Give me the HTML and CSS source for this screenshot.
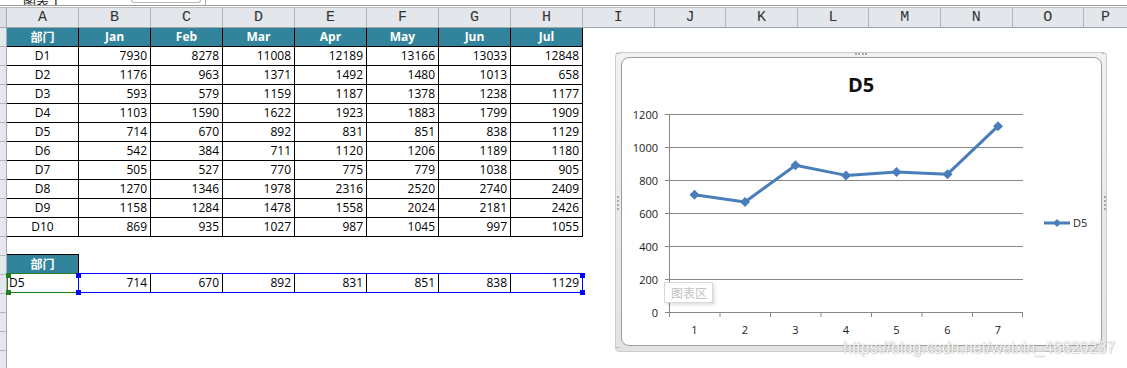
FILE: index.html
```html
<!DOCTYPE html>
<html lang="zh-CN">
<head>
<meta charset="utf-8">
<title>Sheet</title>
<link rel="stylesheet" href="styles.css">
</head>
<body>
<div class="tabs">
  <span class="tab-label">图表 1</span>
  <span class="tab-pill"></span>
  <span class="tab-sep"></span>
</div>
<div class="sheet">
  <div class="rowhdr">
    <div class="corner"></div>
    <div class="rh"></div><div class="rh"></div><div class="rh"></div><div class="rh"></div><div class="rh"></div><div class="rh"></div>
    <div class="rh"></div><div class="rh"></div><div class="rh"></div><div class="rh"></div><div class="rh"></div><div class="rh"></div>
    <div class="rh"></div><div class="rh"></div><div class="rh"></div><div class="rh"></div><div class="rh"></div><div class="rh"></div>
  </div>
  <div class="cells">
    <div class="colhdr">
      <div class="ch">A</div><div class="ch">B</div><div class="ch">C</div><div class="ch">D</div>
      <div class="ch">E</div><div class="ch">F</div><div class="ch">G</div><div class="ch">H</div>
      <div class="ch n">I</div><div class="ch n">J</div><div class="ch n">K</div><div class="ch n">L</div>
      <div class="ch n">M</div><div class="ch n">N</div><div class="ch n">O</div><div class="ch last">P</div>
    </div>
    <div class="tbl">
      <div class="row head"><div class="c cjk">部门</div><div class="c">Jan</div><div class="c">Feb</div><div class="c">Mar</div><div class="c">Apr</div><div class="c">May</div><div class="c">Jun</div><div class="c">Jul</div></div>
      <div class="row"><div class="c name">D1</div><div class="c">7930</div><div class="c">8278</div><div class="c">11008</div><div class="c">12189</div><div class="c">13166</div><div class="c">13033</div><div class="c">12848</div></div>
      <div class="row"><div class="c name">D2</div><div class="c">1176</div><div class="c">963</div><div class="c">1371</div><div class="c">1492</div><div class="c">1480</div><div class="c">1013</div><div class="c">658</div></div>
      <div class="row"><div class="c name">D3</div><div class="c">593</div><div class="c">579</div><div class="c">1159</div><div class="c">1187</div><div class="c">1378</div><div class="c">1238</div><div class="c">1177</div></div>
      <div class="row"><div class="c name">D4</div><div class="c">1103</div><div class="c">1590</div><div class="c">1622</div><div class="c">1923</div><div class="c">1883</div><div class="c">1799</div><div class="c">1909</div></div>
      <div class="row"><div class="c name">D5</div><div class="c">714</div><div class="c">670</div><div class="c">892</div><div class="c">831</div><div class="c">851</div><div class="c">838</div><div class="c">1129</div></div>
      <div class="row"><div class="c name">D6</div><div class="c">542</div><div class="c">384</div><div class="c">711</div><div class="c">1120</div><div class="c">1206</div><div class="c">1189</div><div class="c">1180</div></div>
      <div class="row"><div class="c name">D7</div><div class="c">505</div><div class="c">527</div><div class="c">770</div><div class="c">775</div><div class="c">779</div><div class="c">1038</div><div class="c">905</div></div>
      <div class="row"><div class="c name">D8</div><div class="c">1270</div><div class="c">1346</div><div class="c">1978</div><div class="c">2316</div><div class="c">2520</div><div class="c">2740</div><div class="c">2409</div></div>
      <div class="row"><div class="c name">D9</div><div class="c">1158</div><div class="c">1284</div><div class="c">1478</div><div class="c">1558</div><div class="c">2024</div><div class="c">2181</div><div class="c">2426</div></div>
      <div class="row"><div class="c name">D10</div><div class="c">869</div><div class="c">935</div><div class="c">1027</div><div class="c">987</div><div class="c">1045</div><div class="c">997</div><div class="c">1055</div></div>
    </div>
    <div class="spacer"></div>
    <div class="tbl tbl2">
      <div class="row head head2"><div class="c cjk">部门</div></div>
      <div class="row selrow">
        <div class="c left">D5</div><div class="c">714</div><div class="c">670</div><div class="c">892</div><div class="c">831</div><div class="c">851</div><div class="c">838</div><div class="c">1129</div>
        <div class="sel-a"><i class="hg tl"></i><i class="hg bl"></i></div>
        <div class="sel-b"><i class="hb tl"></i><i class="hb bl"></i><i class="hb tr"></i><i class="hb br"></i></div>
      </div>
    </div>
  </div>
</div>

<div class="chart">
  <div class="chart-inner">
    <svg class="plot" width="479" height="287" viewBox="622 58 479 287" xmlns="http://www.w3.org/2000/svg">
      <text class="title" x="861" y="92" text-anchor="middle">D5</text>
      <g stroke="#878787" stroke-width="1" fill="none">
        <path d="M665 114.5H1023M665 147.5H1023M665 180.5H1023M665 213.5H1023M665 246.5H1023M665 279.5H1023M665 312.5H1023"/>
        <path d="M669.5 114V317M720 312V317M770.5 312V317M821 312V317M871.5 312V317M922 312V317M972.5 312V317M1022.5 312V317"/>
      </g>
      <g class="ylab" text-anchor="end">
        <text x="658" y="118.5">1200</text>
        <text x="658" y="151.5">1000</text>
        <text x="658" y="184.5">800</text>
        <text x="658" y="217.5">600</text>
        <text x="658" y="250.5">400</text>
        <text x="658" y="283.5">200</text>
        <text x="658" y="316.5">0</text>
      </g>
      <g class="xlab" text-anchor="middle">
        <text x="694.5" y="334">1</text>
        <text x="745" y="334">2</text>
        <text x="795.5" y="334">3</text>
        <text x="846" y="334">4</text>
        <text x="896.5" y="334">5</text>
        <text x="947.5" y="334">6</text>
        <text x="998" y="334">7</text>
      </g>
      <polyline points="694.5,194.7 745,202 795.5,165.3 846,175.4 896.5,172.1 947.5,174.2 998,126.2" fill="none" stroke="#4a7ebb" stroke-width="3" stroke-linejoin="round" stroke-linecap="round"/>
      <g fill="#4a7ebb">
        <path d="M694.5 189.7L699.5 194.7L694.5 199.7L689.5 194.7Z"/>
        <path d="M745 197L750 202L745 207L740 202Z"/>
        <path d="M795.5 160.3L800.5 165.3L795.5 170.3L790.5 165.3Z"/>
        <path d="M846 170.4L851 175.4L846 180.4L841 175.4Z"/>
        <path d="M896.5 167.1L901.5 172.1L896.5 177.1L891.5 172.1Z"/>
        <path d="M947.5 169.2L952.5 174.2L947.5 179.2L942.5 174.2Z"/>
        <path d="M998 121.2L1003 126.2L998 131.2L993 126.2Z"/>
      </g>
      <path d="M1044 223H1070" stroke="#4a7ebb" stroke-width="3"/>
      <path d="M1057 219L1061 223L1057 227L1053 223Z" fill="#4a7ebb"/>
      <text class="legend" x="1073" y="227">D5</text>
    </svg>
  </div>
  <span class="grip grip-top"></span>
  <span class="grip grip-left"></span>
  <span class="grip grip-right"></span>
  <span class="grip grip-tl"></span>
  <span class="grip grip-tr"></span>
  <span class="grip grip-bl"></span>
  <div class="tip">图表区</div>
</div>

<div class="watermark">https://blog.csdn.net/weixin_46620237</div>
</body>
</html>
```

FILE: styles.css
```css
html, body {
  margin: 0;
  padding: 0;
}
body {
  width: 1127px;
  height: 368px;
  overflow: hidden;
  position: relative;
  background: #ffffff;
  font-family: "Open Sans", "Liberation Sans", "Noto Sans CJK SC", sans-serif;
}

/* top tab strip (mostly scrolled away) */
.tabs {
  height: 5px;
  border-bottom: 1px solid #9c9c9c;
  display: flex;
  align-items: flex-end;
  overflow: hidden;
}
.tab-label {
  margin-left: 23px;
  font-family: "Noto Sans CJK SC", sans-serif;
  font-size: 13px;
  line-height: 13px;
  margin-bottom: -3px;
  color: #222;
  width: 108px;
  flex: none;
}
.tab-pill {
  align-self: flex-start;
  width: 68px;
  height: 2px;
  border: 1px solid #b8b8b8;
  border-top: none;
  border-radius: 0 0 8px 8px;
  flex: none;
}
.tab-sep {
  align-self: stretch;
  width: 1px;
  background: #b0b0b0;
  margin-left: 4px;
  flex: none;
}

/* sheet */
.sheet {
  display: flex;
  margin-top: 1px;
}
.rowhdr {
  width: 6px;
  flex: none;
  background: #e4e7ec;
  border-right: 1px solid #a7acb4;
}
.corner {
  height: 21px;
  box-sizing: border-box;
  border-top: 1px solid #b9bcc2;
  border-bottom: 1px solid #a0a5ad;
  background: #dcdfe4;
}
.rh {
  height: 19px;
  box-sizing: border-box;
  border-bottom: 1px solid #b3b7bd;
}
.cells {
  flex: 1;
  min-width: 0;
}
.colhdr {
  display: flex;
  height: 21px;
  box-sizing: border-box;
  border-top: 1px solid #b9bcc2;
  border-bottom: 1px solid #a0a5ad;
  background: #e3e6eb;
}
.ch {
  flex: none;
  width: 72px;
  box-sizing: border-box;
  border-right: 1px solid #b2b6bd;
  text-align: center;
  font-family: "Liberation Mono", monospace;
  font-size: 15px;
  line-height: 19px;
  color: #333;
}
.ch.n { width: 71.6px; }
.ch.last { flex: 1; border-right: none; }

.row {
  display: flex;
  height: 19px;
}
.c {
  flex: none;
  width: 72px;
  box-sizing: border-box;
  border-right: 1px solid #000;
  border-bottom: 1px solid #000;
  font-size: 12px;
  line-height: 18px;
  padding-right: 3px;
  text-align: right;
  color: #000;
  white-space: nowrap;
}
.c.name { text-align: center; padding: 0; }
.c.left { text-align: left; padding: 0 0 0 2px; }
.head .c {
  background: #31849b;
  color: #fff;
  font-weight: bold;
  text-align: center;
  padding: 0;
}
.c.cjk { font-family: "Noto Sans CJK SC", sans-serif; }

.spacer { height: 17px; }
.head2 { height: 20px; }
.head2 .c {
  border-top: 1px solid #000;
  line-height: 17px;
}

/* selection overlays */
.selrow { position: relative; }
.sel-a {
  position: absolute;
  left: 0;
  top: -1px;
  width: 72px;
  height: 20px;
  box-sizing: border-box;
  border: 1px solid #1e7d1e;
  border-right: none;
}
.sel-b {
  position: absolute;
  left: 71px;
  top: -1px;
  width: 505px;
  height: 20px;
  box-sizing: border-box;
  border: 1px solid #0000ff;
}
.hg, .hb {
  position: absolute;
  width: 5px;
  height: 5px;
}
.hg { background: #1e7d1e; }
.hb { background: #0000ff; }
.hg.tl { left: -2px; top: -1px; }
.hg.bl { left: -2px; bottom: -3px; }
.hb.tl { left: -3px; top: -1px; }
.hb.bl { left: -3px; bottom: -3px; }
.hb.tr { right: -3px; top: -1px; }
.hb.br { right: -3px; bottom: -3px; }

/* chart object */
.chart {
  position: absolute;
  left: 615px;
  top: 52px;
  width: 492px;
  height: 300px;
  box-sizing: border-box;
  border: 1px solid #cdcdcd;
  border-radius: 4px;
  padding: 4px 4px 5px 5px;
  background: linear-gradient(#f1f1f1, #e3e3e3);
}
.chart-inner {
  width: 100%;
  height: 100%;
  box-sizing: border-box;
  border: 1px solid #9d9d9d;
  border-radius: 8px 8px 8px 8px;
  background: #fff;
  overflow: hidden;
}
.plot { display: block; }
.title {
  font-family: "Open Sans", sans-serif;
  font-weight: bold;
  font-size: 20px;
  fill: #111;
}
.ylab text, .xlab text, .legend {
  font-family: "Open Sans", sans-serif;
  font-size: 11px;
  fill: #1a1a1a;
}
.grip {
  position: absolute;
  display: block;
}
.grip-top {
  left: 239px;
  top: 0;
  width: 12px;
  border-top: 2px dotted #a8a8a8;
}
.grip-left {
  left: 1px;
  top: 143px;
  height: 14px;
  border-left: 2px dotted #a8a8a8;
}
.grip-right {
  right: 0;
  top: 143px;
  height: 14px;
  border-left: 2px dotted #a8a8a8;
}
.grip-tl, .grip-tr, .grip-bl {
  width: 4px;
  height: 3px;
  border-top: 1px dotted #b0b0b0;
}
.grip-tl { left: 0; top: 0; }
.grip-tr { right: 0; top: 0; }
.grip-bl { left: 0; bottom: 0; }
.tip {
  position: absolute;
  left: 48px;
  top: 229px;
  width: 49px;
  height: 21px;
  box-sizing: border-box;
  border: 1px solid #d8d8d8;
  background: #fff;
  box-shadow: 2px 2px 3px rgba(0, 0, 0, 0.12);
  font-family: "Noto Sans CJK SC", sans-serif;
  font-size: 12px;
  line-height: 19px;
  color: #c2c2c2;
  padding-left: 6px;
}

.watermark {
  position: absolute;
  left: 843px;
  top: 339px;
  font-family: "Liberation Sans", sans-serif;
  font-size: 16px;
  line-height: 18px;
  color: rgba(255, 255, 255, 0.9);
  text-shadow: 0 0 1px rgba(120, 120, 120, 0.6), 1px 1px 1px rgba(150, 150, 150, 0.35);
  white-space: nowrap;
}
```
